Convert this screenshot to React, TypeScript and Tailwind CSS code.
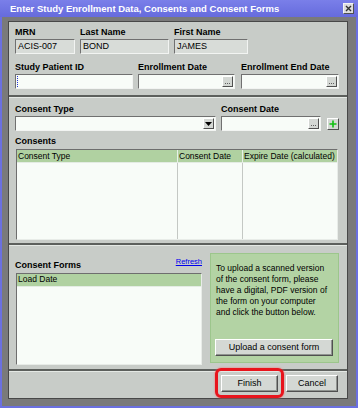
import React from "react";

const insetRO =
  "h-[15px] bg-[#d8dcd8] border border-t-[#707070] border-l-[#707070] border-b-[#f2f4f2] border-r-[#f2f4f2] flex items-center pl-[2px] text-[9px] leading-none";
const insetW =
  "h-[15px] bg-[#f8fcf8] border border-t-[#707070] border-l-[#707070] border-b-[#f2f4f2] border-r-[#f2f4f2] flex items-center justify-between";
const raised =
  "bg-[#d4d8d4] border border-t-[#ffffff] border-l-[#ffffff] border-b-[#505050] border-r-[#505050]";
const label = "text-[9px] font-bold leading-[10px] h-[10px] whitespace-nowrap";

function Dots() {
  return (
    <div className={`${raised} w-[11px] h-[11px] mr-[1px] flex items-end justify-center pb-[2px]`}>
      <div className="flex gap-[1px]">
        <div className="w-[1px] h-[1px] bg-[#606060]" />
        <div className="w-[1px] h-[1px] bg-[#606060]" />
        <div className="w-[1px] h-[1px] bg-[#606060]" />
      </div>
    </div>
  );
}

function Sep() {
  return (
    <div className="flex flex-col">
      <div className="h-[2px] bg-[#5c5f5c]" />
      <div className="h-[1px] bg-[#e4e8e4]" />
    </div>
  );
}

function Btn({ children, w }: { children: React.ReactNode; w: string }) {
  return (
    <div
      className={`${raised} ${w} h-[17px] flex items-center justify-center text-[9px] leading-none shadow-[inset_-1px_-1px_0_#909490]`}
    >
      {children}
    </div>
  );
}

export default function App() {
  return (
    <div className="w-[358px] h-[408px] bg-[#6b70e0] flex flex-col font-['Liberation_Sans',Arial,sans-serif] text-black overflow-hidden">
      {/* title bar */}
      <div className="h-[17px] flex items-center justify-between pl-[10px] pr-[4px] bg-gradient-to-b from-[#7a7fe9] to-[#666bdd]">
        <span className="text-white font-bold text-[9.5px] leading-none whitespace-nowrap">
          Enter Study Enrollment Data, Consents and Consent Forms
        </span>
        <div className="w-[11px] h-[11px] bg-[#dcdcdc] border border-t-[#f4f4f4] border-l-[#f4f4f4] border-b-[#505050] border-r-[#505050] flex items-center justify-center">
          <svg width="7" height="7" viewBox="0 0 7 7">
            <path d="M1 1 L6 6 M6 1 L1 6" stroke="#303030" strokeWidth="1.4" />
          </svg>
        </div>
      </div>

      {/* gray frame */}
      <div className="flex-1 mx-[2px] mb-[2px] bg-[#7a7a7a] pt-[4px] pl-[6px] pr-[8px] pb-[7px] flex">
        <div className="flex-1 bg-[#c8ccc8] border border-[#484848] flex flex-col">
          {/* Section 1 */}
          <div className="h-[73px] pl-[5px] pt-[5px] flex flex-col gap-[8px]">
            <div className="flex">
              <div className="flex flex-col w-[60px] ml-[1px]">
                <div className={label}>MRN</div>
                <div className={`${insetRO} mt-[2px]`}>ACIS-007</div>
              </div>
              <div className="flex flex-col w-[89px] ml-[5px]">
                <div className={label}>Last Name</div>
                <div className={`${insetRO} mt-[2px]`}>BOND</div>
              </div>
              <div className="flex flex-col w-[74px] ml-[5px]">
                <div className={label}>First Name</div>
                <div className={`${insetRO} mt-[2px]`}>JAMES</div>
              </div>
            </div>
            <div className="flex">
              <div className="flex flex-col w-[118px] ml-[1px]">
                <div className={label}>Study Patient ID</div>
                <div className={`${insetW} mt-[2px]`}>
                  <div className="ml-[1px] w-[1px] h-[11px] border-l border-dotted border-[#2636d8]" />
                </div>
              </div>
              <div className="flex flex-col w-[97px] ml-[5px]">
                <div className={label}>Enrollment Date</div>
                <div className={`${insetW} mt-[2px]`}>
                  <span />
                  <Dots />
                </div>
              </div>
              <div className="flex flex-col w-[98px] ml-[6px]">
                <div className={label}>Enrollment End Date</div>
                <div className={`${insetW} mt-[2px]`}>
                  <span />
                  <Dots />
                </div>
              </div>
            </div>
          </div>
          <Sep />

          {/* Section 2 */}
          <div className="h-[145px] pl-[6px] pt-[6px] flex flex-col">
            <div className="flex items-end">
              <div className="flex flex-col w-[201px]">
                <div className={label}>Consent Type</div>
                <div className={`${insetW} h-[14px] mt-[2px]`}>
                  <span />
                  <div className={`${raised} w-[11px] h-[11px] mr-[1px] flex items-center justify-center`}>
                    <svg width="7" height="4" viewBox="0 0 7 4">
                      <path d="M0 0 L7 0 L3.5 4 Z" fill="#000" />
                    </svg>
                  </div>
                </div>
              </div>
              <div className="flex flex-col w-[100px] ml-[5px]">
                <div className={label}>Consent Date</div>
                <div className={`${insetW} h-[14px] mt-[2px]`}>
                  <span />
                  <Dots />
                </div>
              </div>
              <div className={`${raised} w-[12px] h-[12px] ml-[6px] mb-[1px] flex items-center justify-center`}>
                <svg width="8" height="8" viewBox="0 0 8 8">
                  <path d="M4 0.5 V7.5 M0.5 4 H7.5" stroke="#10c010" strokeWidth="1.6" />
                </svg>
              </div>
            </div>
            <div className={`${label} mt-[5px]`}>Consents</div>
            <div className="mt-[3px] ml-[1px] w-[322px] h-[91px] bg-[#f8fcf8] border border-t-[#6e6e6e] border-l-[#6e6e6e] border-b-[#e8ece8] border-r-[#e8ece8] flex flex-col">
              <div className="h-[13px] flex bg-[#b0d1a1] border-b border-[#e4ece4] text-[8.5px] leading-none">
                <div className="w-[161px] border-r border-[#e8f0e8] flex items-center pl-[1px]">Consent Type</div>
                <div className="w-[65px] border-r border-[#e8f0e8] flex items-center pl-[1px]">Consent Date</div>
                <div className="flex-1 flex items-center pl-[1px]">Expire Date (calculated)</div>
              </div>
              <div className="flex-1 flex">
                <div className="w-[161px] border-r border-[#c4c8c4]" />
                <div className="w-[65px] border-r border-[#c4c8c4]" />
                <div className="flex-1" />
              </div>
            </div>
          </div>
          <Sep />

          {/* Section 3 */}
          <div className="h-[123px] pl-[6px] pt-[7px] flex">
            <div className="w-[188px] flex flex-col pt-[5px]">
              <div className="flex justify-between items-end">
                <div className={label}>Consent Forms</div>
                <div className="text-[7.5px] leading-none text-[#0000ee] underline mb-[4px] mr-[1px]">Refresh</div>
              </div>
              <div className="mt-[3px] ml-[1px] w-[186px] h-[92px] bg-[#f8fcf8] border border-t-[#6e6e6e] border-l-[#6e6e6e] border-b-[#e8ece8] border-r-[#e8ece8] flex flex-col">
                <div className="h-[13px] bg-[#b0d1a1] border-b border-[#e4ece4] text-[8.5px] leading-none flex items-center pl-[1px]">
                  Load Date
                </div>
              </div>
            </div>
            <div className="ml-[7px] w-[129px] h-[110px] bg-[#b3d3a4] border border-[#9cc68c] flex flex-col pl-[5px] pt-[9px] pr-[3px]">
              <div className="text-[8.5px] leading-[11px] whitespace-nowrap">
                To upload a scanned version
                <br />
                of the consent form, please
                <br />
                have a digital, PDF version of
                <br />
                the form on your computer
                <br />
                and click the button below.
              </div>
              <div className="mt-auto mb-[6px] -ml-[1px]">
                <Btn w="w-[118px]">Upload a consent form</Btn>
              </div>
            </div>
          </div>
          <Sep />

          {/* Section 4 */}
          <div className="h-[26px] pt-[3px] pr-[9px] flex justify-end items-start">
            <div className="relative">
              <Btn w="w-[57px]">Finish</Btn>
              <div className="absolute -left-[6px] -right-[6px] -top-[7px] -bottom-[6px] border-[3px] border-[#e8141c] rounded-[6px] shadow-[0_0_2px_#ff6060]" />
            </div>
            <div className="ml-[8px]">
              <Btn w="w-[52px]">Cancel</Btn>
            </div>
          </div>
        </div>
      </div>
    </div>
  );
}
